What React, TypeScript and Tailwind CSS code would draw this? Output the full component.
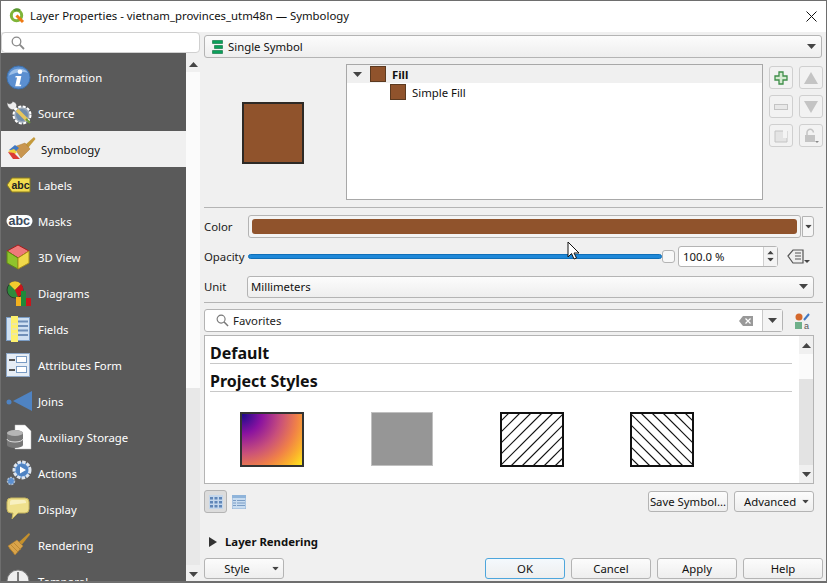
import type { ReactNode } from "react";

const BROWN = "#90532c";

function Caret({ className = "" }: { className?: string }) {
  return (
    <svg width="9" height="5" viewBox="0 0 9 5" className={className}>
      <path d="M0 0h9L4.500 5z" fill="#444" />
    </svg>
  );
}

function QgisLogo() {
  return (
    <svg width="16" height="16" viewBox="0 0 16 16">
      <circle cx="7.500" cy="7.500" r="5.200" fill="none" stroke="#7fb539" strokeWidth="3" />
      <path d="M7.500 7.500l6.500 6.500" stroke="#ee7913" strokeWidth="3" />
      <path d="M5 2.500a5.500 5.500 0 0 1 6 0" stroke="#589632" strokeWidth="2.500" fill="none" />
    </svg>
  );
}

const icons: Record<string, ReactNode> = {
  Information: (
    <svg width="25" height="25" viewBox="0 0 26 26">
      <circle cx="13" cy="13" r="12" fill="#5b8fd0" stroke="#3c6ea8" />
      <path d="M3 11a11 9 0 0 1 20-3c-6-2-14 0-20 3z" fill="#9dc0e8" />
      <circle cx="14.500" cy="7" r="2.400" fill="#fff" />
      <path d="M10 11.500h6l-2 9h2l-.5 1.500H9.500l2-9H9.700z" fill="#fff" />
    </svg>
  ),
  Source: (
    <svg width="26" height="26" viewBox="0 0 26 26">
      <path d="M1 2.500c3 3 6 0 5-1 3 0 6 3 4 6l4 3-3 3-3-4c-3 1-7-2-7-7z" fill="#eee" stroke="#555" strokeWidth=".5" />
      <circle cx="16" cy="15" r="8.500" fill="#9aa7b5" stroke="#fff" strokeWidth="2" strokeDasharray="3 1.500" />
      <circle cx="16" cy="15" r="6" fill="#6f8cab" />
      <path d="M11 10l10 10" stroke="#e6c65c" strokeWidth="3.500" />
      <path d="M20 19l4 4" stroke="#6d9b3a" strokeWidth="2" />
    </svg>
  ),
  Symbology: (
    <svg width="28" height="24" viewBox="0 0 28 24">
      <path d="M17 8L26 0l1.500 2L20 11z" fill="#c49a3c" />
      <path d="M6 10l11-4 5 6-9 9z" fill="#c9964f" stroke="#a87a34" strokeWidth=".5" />
      <path d="M1 13l6-5 4 3-4 4z" fill="#3f78c4" />
      <path d="M0 14l6-2 3 3-3 3z" fill="#f0cf3a" />
      <path d="M0 15l6 1 6 6-7 0z" fill="#dc3b35" />
    </svg>
  ),
  Labels: (
    <svg width="25" height="16" viewBox="0 0 25 16">
      <path d="M6 1h18v14H6L1 8z" fill="#f2dc4e" stroke="#8a7a1c" />
      <text x="5.500" y="11.500" fontSize="10.500" fontWeight="700" fontFamily="Liberation Sans, sans-serif" fill="#222">abc</text>
    </svg>
  ),
  Masks: (
    <svg width="27" height="16" viewBox="0 0 27 16">
      <rect x=".5" y="2" width="26" height="12" rx="6" fill="#fff" />
      <text x="2.500" y="12" fontSize="12.500" fontWeight="700" fontFamily="Liberation Sans, sans-serif" fill="#3c4a5c">abc</text>
    </svg>
  ),
  "3D View": (
    <svg width="24" height="26" viewBox="0 0 24 26">
      <path d="M12 1l11 6-11 7L1 7z" fill="#ef7a7a" stroke="#a81c1c" />
      <path d="M1 7l11 7v11L1 19z" fill="#8fc42c" stroke="#5f8a14" />
      <path d="M23 7l-11 7v11l11-6z" fill="#f0d84a" stroke="#a88f1c" />
    </svg>
  ),
  Diagrams: (
    <svg width="25" height="26" viewBox="0 0 25 26">
      <circle cx="9" cy="10" r="8" fill="#2e8b3c" stroke="#222" strokeWidth=".7" />
      <path d="M9 10L3 4a8 8 0 0 1 12 0z" fill="#f2cc2e" />
      <path d="M9 10l6-6a8 8 0 0 1-3 13z" fill="#c8161c" />
      <rect x="10" y="17" width="5" height="9" fill="#f2b01e" />
      <rect x="15" y="11" width="5" height="15" fill="#1e8a3a" />
      <rect x="20" y="18" width="5" height="8" fill="#c8161c" />
    </svg>
  ),
  Fields: (
    <svg width="24" height="26" viewBox="0 0 24 26">
      <rect x=".5" y="1.500" width="23" height="23" fill="#cfe0f2" stroke="#7a9cc4" />
      <path d="M12 5.500h10M12 10h10M12 14.500h10M12 19h10" stroke="#6f8fb8" strokeWidth="2" />
      <rect x="5" y="0" width="7" height="26" fill="#fdf06e" />
      <path d="M6 8h5M6 13h5M6 18h5" stroke="#ddd" />
    </svg>
  ),
  "Attributes Form": (
    <svg width="24" height="24" viewBox="0 0 24 24">
      <rect x=".5" y=".5" width="23" height="23" fill="#e6edf5" stroke="#8ca6c6" />
      <path d="M3 7h6M3 17h6" stroke="#555" strokeWidth="2" />
      <rect x="10.500" y="3.500" width="10" height="6" fill="#fff" stroke="#7a9cc4" />
      <rect x="10.500" y="13.500" width="10" height="6" fill="#fff" stroke="#7a9cc4" />
    </svg>
  ),
  Joins: (
    <svg width="26" height="20" viewBox="0 0 26 20">
      <path d="M7 10L26 0v20z" fill="#4f83c2" />
      <circle cx="3" cy="11" r="2.500" fill="#4f83c2" />
    </svg>
  ),
  "Auxiliary Storage": (
    <svg width="26" height="26" viewBox="0 0 26 26">
      <path d="M9 1h10l6 6v18H9z" fill="#fff" stroke="#bbb" strokeWidth=".5" />
      <path d="M1 9a8 3 0 0 1 16 0v12a8 3 0 0 1-16 0z" fill="#777" />
      <ellipse cx="9" cy="9" rx="8" ry="3" fill="#b5b5b5" />
      <path d="M1 15a8 3 0 0 0 16 0" stroke="#ddd" fill="none" />
    </svg>
  ),
  Actions: (
    <svg width="27" height="26" viewBox="0 0 27 26">
      <circle cx="16" cy="10" r="8" fill="#5b8fd0" stroke="#dfe6ee" strokeWidth="3" strokeDasharray="3.500 1.200" />
      <circle cx="16" cy="10" r="6" fill="#4f83c2" />
      <path d="M14 6.500l6 3.500-6 3.500z" fill="#fff" />
      <circle cx="5" cy="21" r="3.500" fill="#5b8fd0" stroke="#aebccc" strokeWidth="1.500" strokeDasharray="2 1" />
    </svg>
  ),
  Display: (
    <svg width="24" height="24" viewBox="0 0 24 24">
      <path d="M5 1h14a4 4 0 0 1 4 4v7a4 4 0 0 1-4 4H12l-6 6 1-6H5a4 4 0 0 1-4-4V5a4 4 0 0 1 4-4z" fill="#efe08c" stroke="#c4b35c" />
      <path d="M4 8V5a2 2 0 0 1 2-2h12a2 2 0 0 1 2 2v1z" fill="#f8f0c0" />
    </svg>
  ),
  Rendering: (
    <svg width="24" height="24" viewBox="0 0 24 24">
      <path d="M13 9L23 0l1 1.500-8 10z" fill="#c4902c" />
      <path d="M2 13l9-6 6 6-8 9z" fill="#d9a34a" stroke="#b07e28" strokeWidth=".5" />
      <path d="M5 12l7 7M8 10l7 7M3 15l5 5" stroke="#b07e28" strokeWidth=".7" />
    </svg>
  ),
  Temporal: (
    <svg width="24" height="24" viewBox="0 0 24 24">
      <circle cx="12" cy="12" r="11" fill="#eee" stroke="#777" />
      <path d="M12 3v9l6 4" stroke="#555" strokeWidth="1.500" fill="none" />
    </svg>
  ),
};

const sections = [
  "Information",
  "Source",
  "Symbology",
  "Labels",
  "Masks",
  "3D View",
  "Diagrams",
  "Fields",
  "Attributes Form",
  "Joins",
  "Auxiliary Storage",
  "Actions",
  "Display",
  "Rendering",
  "Temporal",
];

function Sidebar() {
  return (
    <div className="flex w-[200px] flex-col">
      <div className="flex h-[21px] w-[199px] items-center rounded-sm border border-[#d0d0d0] bg-white pl-[9px]">
        <svg width="14" height="14" viewBox="0 0 14 14" fill="none" stroke="#8a8a8a" strokeWidth="1.300">
          <circle cx="5.500" cy="5.500" r="4.300" />
          <path d="M8.700 8.700L13 13" strokeWidth="1.800" />
        </svg>
      </div>
      <div className="flex min-h-0 flex-1">
        <div className="w-[185px] overflow-hidden bg-[#5a5a5a] pt-[6px]">
          {sections.map((name) => {
            const selected = name === "Symbology";
            return (
              <div
                key={name}
                className={`flex h-9 items-center ${selected ? "bg-[#f0f0f0] pl-[7px] text-[#111]" : "pl-[5px] text-white"}`}
              >
                <div className={`flex h-full shrink-0 items-center overflow-visible ${selected ? "w-[33px]" : "w-[32px]"}`}>
                  {icons[name]}
                </div>
                <span className="pt-[2px]">{name}</span>
              </div>
            );
          })}
        </div>
        <div className="flex w-[14px] flex-col items-center bg-[#e8e8e8]">
          <div className="flex h-[19px] w-full items-center justify-center bg-[#f0f0f0] pt-[4px]">
            <Caret className="rotate-180" />
          </div>
          <div className="h-[316px] w-full bg-[#fbfbfb]" />
          <div className="flex-1" />
          <div className="flex h-[16px] w-full items-center justify-center bg-[#f0f0f0] pt-[2px]">
            <Caret />
          </div>
        </div>
      </div>
    </div>
  );
}

function Combo({ children, className = "" }: { children: ReactNode; className?: string }) {
  return (
    <div
      className={`flex items-center justify-between rounded-[3px] border border-[#b4b4b4] bg-gradient-to-b from-[#fcfcfc] to-[#eeeeee] pr-[5px] ${className}`}
    >
      <div className="flex items-center">{children}</div>
      <Caret />
    </div>
  );
}

function ToolButton({ children }: { children: ReactNode }) {
  return (
    <div className="flex h-[23px] w-[24px] items-center justify-center rounded-[3px] border border-[#cfcfcf] bg-[#f2f2f2]">
      {children}
    </div>
  );
}

function SymbolTree() {
  return (
    <div className="flex h-[136px] w-[417px] flex-col border border-[#a8a8a8] bg-white">
      <div className="flex h-[18px] items-center bg-[#f0f0f0] pl-[6px]">
        <Caret className="mr-[8px]" />
        <div className="mr-[6px] h-4 w-4 border border-[#5c3a20] bg-[#90532c]" />
        <b className="pt-[1px] font-bold text-[#111]">Fill</b>
      </div>
      <div className="flex h-[18px] items-center pl-[43px]">
        <div className="mr-[6px] h-4 w-4 border border-[#5c3a20] bg-[#90532c]" />
        <span className="pt-[1px] text-[#111]">Simple Fill</span>
      </div>
    </div>
  );
}

function SymbolButtons() {
  const dim = "#c4c4c4";
  return (
    <div className="grid grid-cols-[24px_24px] gap-x-[6px] gap-y-[6px] pt-[2px]">
      <ToolButton>
        <svg width="14" height="14" viewBox="0 0 14 14">
          <path d="M5 1h4v4h4v4H9v4H5V9H1V5h4z" fill="#d6ead2" stroke="#3f8f4a" strokeWidth="1.300" />
        </svg>
      </ToolButton>
      <ToolButton>
        <svg width="14" height="12" viewBox="0 0 14 12"><path d="M7 0l7 12H0z" fill={dim} /></svg>
      </ToolButton>
      <ToolButton>
        <svg width="14" height="6" viewBox="0 0 14 6"><rect x=".5" y=".5" width="13" height="5" fill="#e8e8e8" stroke={dim} /></svg>
      </ToolButton>
      <ToolButton>
        <svg width="14" height="12" viewBox="0 0 14 12"><path d="M0 0h14L7 12z" fill={dim} /></svg>
      </ToolButton>
      <ToolButton>
        <svg width="14" height="14" viewBox="0 0 14 14">
          <path d="M1 2h12v11H1z" fill="#e4e4e4" stroke={dim} />
          <path d="M9 1h4v8H9z" fill="#f4f4f4" />
        </svg>
      </ToolButton>
      <ToolButton>
        <svg width="16" height="16" viewBox="0 0 16 16">
          <path d="M4 7V4.500a3.200 3.200 0 0 1 6.400 0" fill="none" stroke={dim} strokeWidth="1.500" />
          <rect x="2" y="7" width="10" height="7" fill={dim} />
          <path d="M12 13h4l-2 2z" fill="#888" />
        </svg>
      </ToolButton>
    </div>
  );
}

function PropertyRows() {
  return (
    <div className="flex flex-col">
      <div className="flex h-[23px] items-center">
        <span className="w-[44px] pt-[1px] text-[#222]">Color</span>
        <div className="flex h-[23px] w-[553px] items-center rounded-[3px] border border-[#b4b4b4] bg-[#f4f4f4] px-[3px]">
          <div className="h-[15px] w-full rounded-[3px] bg-[#90532c]" />
        </div>
        <div className="ml-[1px] flex h-[21px] w-[12px] items-center justify-center rounded-r-[3px] border border-[#b4b4b4] bg-[#f6f6f6]">
          <Caret className="scale-75" />
        </div>
      </div>
      <div className="mt-[8px] flex h-[20px] items-center">
        <span className="w-[44px] pt-[1px] text-[#222]">Opacity</span>
        <div className="h-[5px] w-[414px] rounded-full border border-[#0f6fb8] bg-[#1e88d8]" />
        <div className="h-[13px] w-[13px] rounded-[3px] border border-[#b4b4b4] bg-[#f8f8f8]" />
        <div className="ml-[3px] flex h-[21px] w-[100px] items-center justify-between rounded-[3px] border border-[#b4b4b4] bg-white pl-[4px]">
          <span className="pt-[1px] text-[#111]">100.0 %</span>
          <div className="flex h-full w-[14px] flex-col items-center justify-center gap-[2px] border-l border-[#d0d0d0] bg-[#f4f4f4]">
            <Caret className="rotate-180 scale-75" />
            <Caret className="scale-75" />
          </div>
        </div>
        <svg width="24" height="16" viewBox="0 0 24 16" className="ml-[9px]">
          <path d="M1 8l5-6h10v13H6z" fill="#eee" stroke="#555" strokeWidth="1.200" />
          <path d="M8 5h6M8 8h6M8 11h6" stroke="#555" />
          <path d="M17 12h6l-3 3z" fill="#444" />
        </svg>
      </div>
      <div className="mt-[10px] flex h-[21px] items-center">
        <span className="w-[43px] pt-[1px] text-[#222]">Unit</span>
        <Combo className="h-[22px] w-[567px] pl-[3px]">
          <span className="pt-[1px] text-[#111]">Millimeters</span>
        </Combo>
      </div>
    </div>
  );
}

function StyleSearch() {
  return (
    <div className="flex items-center">
      <div className="flex h-[23px] w-[579px] items-center rounded-[3px] border border-[#b4b4b4] bg-white">
        <svg width="13" height="13" viewBox="0 0 14 14" fill="none" stroke="#777" strokeWidth="1.200" className="ml-[11px] mr-[4px]">
          <circle cx="5.500" cy="5.500" r="4.300" />
          <path d="M8.700 8.700L13 13" strokeWidth="1.600" />
        </svg>
        <span className="flex-1 text-[#222]">Favorites</span>
        <svg width="14" height="10" viewBox="0 0 14 10" className="mr-[9px]">
          <path d="M4 0h10v10H4L0 5z" fill="#999" />
          <path d="M6.500 2.500l5 5m0-5l-5 5" stroke="#fff" strokeWidth="1.200" />
        </svg>
        <div className="flex h-full w-[20px] items-center justify-center border-l border-[#c8c8c8] bg-[#f4f4f4]">
          <Caret />
        </div>
      </div>
      <svg width="16" height="18" viewBox="0 0 16 18" className="ml-[11px]">
        <circle cx="5" cy="5" r="3.500" fill="#d4682c" />
        <path d="M10 8l5-6" stroke="#3f78c4" strokeWidth="2" />
        <rect x="1" y="10" width="7" height="7" fill="#6fb08a" />
        <text x="10" y="17" fontSize="9" fontFamily="Liberation Sans, sans-serif" fill="#555">a</text>
      </svg>
    </div>
  );
}

function Hatch({ dir }: { dir: "left" | "right" }) {
  const lines = Array.from({ length: 12 }, (_, i) => i * 11 - 56);
  return (
    <svg width="64" height="55" viewBox="0 0 64 55">
      <rect x="1" y="1" width="62" height="53" fill="#fff" />
      {lines.map((o) => (
        <line
          key={o}
          x1={o}
          y1={dir === "right" ? 55 : 0}
          x2={o + 55}
          y2={dir === "right" ? 0 : 55}
          stroke="#111"
          strokeWidth="1.200"
        />
      ))}
      <rect x="1" y="1" width="62" height="53" fill="none" stroke="#111" strokeWidth="2" />
    </svg>
  );
}

function StyleList() {
  return (
    <div className="flex h-[149px] w-[610px] border border-[#b4b4b4] bg-white">
      <div className="flex-1 overflow-hidden pl-[5px] pr-[7px]">
        <div className="h-[28px] border-b border-[#c8c8c8] pt-[5px] text-[16px] leading-[24px] font-bold text-[#111]">Default</div>
        <div className="h-[28px] border-b border-[#c8c8c8] pt-[5px] text-[16px] leading-[24px] font-bold text-[#111]">Project Styles</div>
        <div className="mt-[20px] -ml-[3px] grid grid-cols-[130px_130px_130px_130px] justify-items-center">
          <div className="h-[55px] w-[64px] border-2 border-[#333] bg-[radial-gradient(circle_at_0%_0%,#1a0a8c_0%,#8a12a0_25%,#c9507a_50%,#f08048_70%,#fbb02c_85%,#fde81e_100%)]" />
          <div className="h-[54px] w-[62px] border border-[#c0c0c0] bg-[#969696]" />
          <Hatch dir="right" />
          <Hatch dir="left" />
        </div>
      </div>
      <div className="flex w-[14px] flex-col bg-[#e3e3e3]">
        <div className="flex h-[18px] items-center justify-center bg-[#f0f0f0]">
          <Caret className="rotate-180" />
        </div>
        <div className="h-[25px] bg-[#fbfbfb]" />
        <div className="flex-1" />
        <div className="flex h-[18px] items-center justify-center bg-[#f0f0f0]">
          <Caret />
        </div>
      </div>
    </div>
  );
}

function PushButton({
  label,
  className = "",
  caret,
  active,
}: {
  label: string;
  className?: string;
  caret?: boolean;
  active?: boolean;
}) {
  return (
    <div
      className={`relative flex h-[21px] w-[80px] items-center justify-center rounded-[3px] border bg-gradient-to-b to-[#eeeeee] whitespace-nowrap text-[#111] ${
        active ? "border-[#4ea6dc] from-[#f4f9fd]" : "border-[#b4b4b4] from-[#fcfcfc]"
      } ${className}`}
    >
      <span className="pt-[1px]">{label}</span>
      {caret && <Caret className="absolute right-[3px] top-[7px] scale-75" />}
    </div>
  );
}

function ViewToggles() {
  return (
    <div className="flex items-center">
      <div className="flex h-[23px] w-[23px] items-center justify-center rounded-[3px] border border-[#b4b4b4] bg-[#dcdcdc]">
        <svg width="14" height="14" viewBox="0 0 14 14">
          <rect width="14" height="14" fill="#c4d7ec" />
          <path d="M1 2h3v2.500H1zM5.500 2h3v2.500h-3zM10 2h3v2.500h-3zM1 6h3v2.500H1zM5.500 6h3v2.500h-3zM10 6h3v2.500h-3zM1 10h3v2.500H1zM5.500 10h3v2.500h-3zM10 10h3v2.500h-3z" fill="#5f86b8" />
        </svg>
      </div>
      <svg width="14" height="14" viewBox="0 0 14 14" className="ml-[5px]">
        <rect width="14" height="14" fill="#c8dcf0" stroke="#8fb0d4" />
        <rect width="14" height="3" fill="#8fb4da" />
        <path d="M1 5.500h3M5 5.500h8M1 8h3M5 8h8M1 10.500h3M5 10.500h8" stroke="#7a9cc4" />
      </svg>
    </div>
  );
}

function Cursor() {
  return (
    <svg width="14" height="20" viewBox="0 0 14 20" className="absolute left-[566px] top-[240px]">
      <path d="M1 1v15l3.500-3.500L7 18l2.500-1-2.500-5h5z" fill="#fff" stroke="#111" strokeWidth="1" />
    </svg>
  );
}

export default function App() {
  return (
    <div className="relative flex h-[583px] w-[827px] flex-col overflow-hidden border-x border-t border-b-2 border-[#6e6e6e] bg-[#f0f0f0] font-['Noto_Sans',sans-serif] text-[11.35px] leading-4">
      <div className="flex h-[31px] shrink-0 items-center bg-white pb-[1px] pl-[8px]">
        <QgisLogo />
        <span className="ml-[5px] text-[#111]">Layer Properties - vietnam_provinces_utm48n — Symbology</span>
        <div className="flex-1" />
        <svg width="11" height="11" viewBox="0 0 11 11" className="mr-[9px]" stroke="#111" strokeWidth="1">
          <path d="M.5.500l10 10m0-10l-10 10" />
        </svg>
      </div>
      <div className="flex min-h-0 flex-1">
        <Sidebar />
        <div className="flex flex-1 flex-col pl-[3px] pt-[3px]">
          <Combo className="h-[23px] w-[618px] pl-[7px]">
            <svg width="11" height="14" viewBox="0 0 11 14" className="mr-[5px]">
              <path d="M.5.500h10v3h-10zM2.500 5.500h8v3h-8zM.5 10.500h10v3h-10z" fill="#0aa05a" stroke="#0b6b3c" strokeWidth=".6" />
            </svg>
            <span className="text-[#111]">Single Symbol</span>
          </Combo>
          <div className="mt-[6px] flex">
            <div className="w-[142px] pl-[38px] pt-[38px]">
              <div className="h-[62px] w-[62px] border-2 border-[#2e2a26]" style={{ backgroundColor: BROWN }} />
            </div>
            <SymbolTree />
            <div className="ml-[6px]">
              <SymbolButtons />
            </div>
          </div>
          <div className="mt-[7px] w-[619px] border-t border-[#b4b4b4]" />
          <div className="mt-[7px]">
            <PropertyRows />
          </div>
          <div className="mt-[5px] w-[619px] border-t border-[#b4b4b4]" />
          <div className="mt-[6px]">
            <StyleSearch />
          </div>
          <div className="mt-[3px]">
            <StyleList />
          </div>
          <div className="mt-[6px] flex w-[610px] items-center justify-between">
            <ViewToggles />
            <div className="flex gap-[6px]">
              <PushButton label="Save Symbol..." />
              <PushButton label="Advanced" caret className="justify-start pl-[9px]" />
            </div>
          </div>
          <div className="mt-[21px] flex h-[16px] items-center pl-[5px]">
            <svg width="8" height="10" viewBox="0 0 8 10" className="mr-[8px]">
              <path d="M0 0l8 5-8 5z" fill="#333" />
            </svg>
            <b className="font-bold text-[#111]">Layer Rendering</b>
          </div>
          <div className="mt-[8px] flex w-[619px] gap-[6px]">
            <div className="mr-[195px]">
              <PushButton label="Style" caret className="pr-[14px]" />
            </div>
            <PushButton label="OK" active />
            <PushButton label="Cancel" />
            <PushButton label="Apply" />
            <PushButton label="Help" />
          </div>
        </div>
      </div>
      <Cursor />
    </div>
  );
}
